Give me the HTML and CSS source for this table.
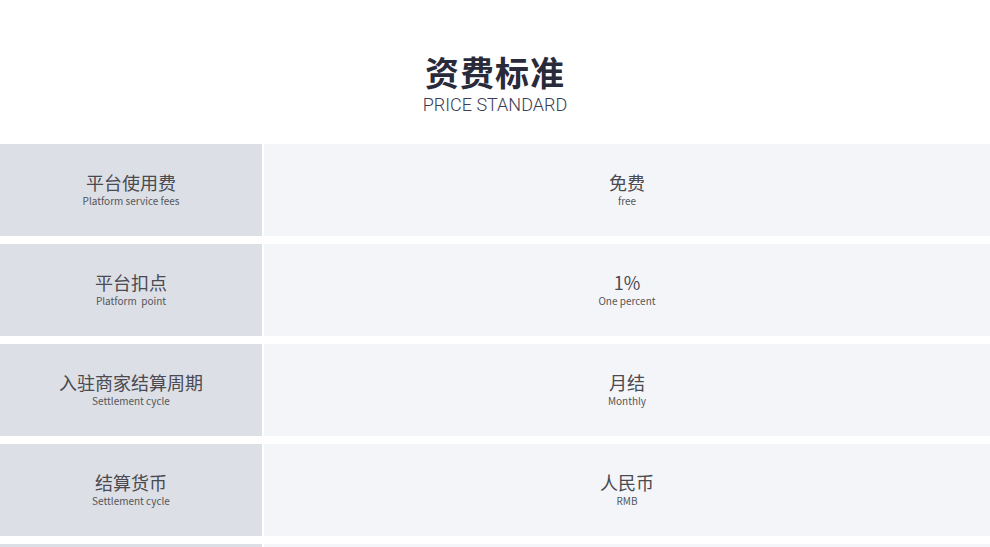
FILE: index.html
```html
<!DOCTYPE html>
<html lang="zh">
<head>
<meta charset="utf-8">
<title>资费标准</title>
<link rel="stylesheet" href="styles.css">
</head>
<body>
<section class="price">
  <header class="head">
    <h1 class="title">资费标准</h1>
    <p class="subtitle">PRICE STANDARD</p>
  </header>
  <div class="rows">
    <div class="row">
      <div class="cell key"><span class="zh">平台使用费</span><span class="en">Platform service fees</span></div>
      <div class="cell val"><span class="zh">免费</span><span class="en">free</span></div>
    </div>
    <div class="row">
      <div class="cell key"><span class="zh">平台扣点</span><span class="en">Platform&nbsp; point</span></div>
      <div class="cell val"><span class="zh">1%</span><span class="en">One percent</span></div>
    </div>
    <div class="row">
      <div class="cell key"><span class="zh">入驻商家结算周期</span><span class="en">Settlement cycle</span></div>
      <div class="cell val"><span class="zh">月结</span><span class="en">Monthly</span></div>
    </div>
    <div class="row">
      <div class="cell key"><span class="zh">结算货币</span><span class="en">Settlement cycle</span></div>
      <div class="cell val"><span class="zh">人民币</span><span class="en">RMB</span></div>
    </div>
    <div class="row">
      <div class="cell key"></div>
      <div class="cell val"></div>
    </div>
  </div>
</section>
</body>
</html>
```
FILE: styles.css
```css
html, body {
  margin: 0;
  padding: 0;
  background: #ffffff;
  font-family: "Noto Sans CJK SC", "Noto Sans", sans-serif;
  overflow: hidden;
}
.price {
  width: 990px;
}
.head {
  padding-top: 50px;
  height: 144px;
  box-sizing: border-box;
  text-align: center;
}
.title {
  margin: 0;
  font-size: 34px;
  line-height: 44px;
  font-weight: 700;
  color: #2a2b3a;
  letter-spacing: 1px;
}
.subtitle {
  margin: 0;
  font-family: Roboto, "Liberation Sans", sans-serif;
  font-weight: 300;
  font-size: 18px;
  line-height: 22px;
  color: #3a3d55;
}
.rows {
  display: flex;
  flex-direction: column;
  gap: 8px;
}
.row {
  display: flex;
  gap: 2px;
  height: 92px;
}
.cell {
  display: flex;
  flex-direction: column;
  align-items: center;
  justify-content: center;
  box-sizing: border-box;
}
.key {
  width: 262px;
  background: #dcdfe6;
}
.val {
  flex: 1;
  background: #f4f5f9;
}
.zh {
  font-size: 18px;
  line-height: 21px;
  color: #4a4a50;
}
.en {
  margin-top: 1px;
  font-size: 10px;
  line-height: 14px;
  color: #555558;
}
```
